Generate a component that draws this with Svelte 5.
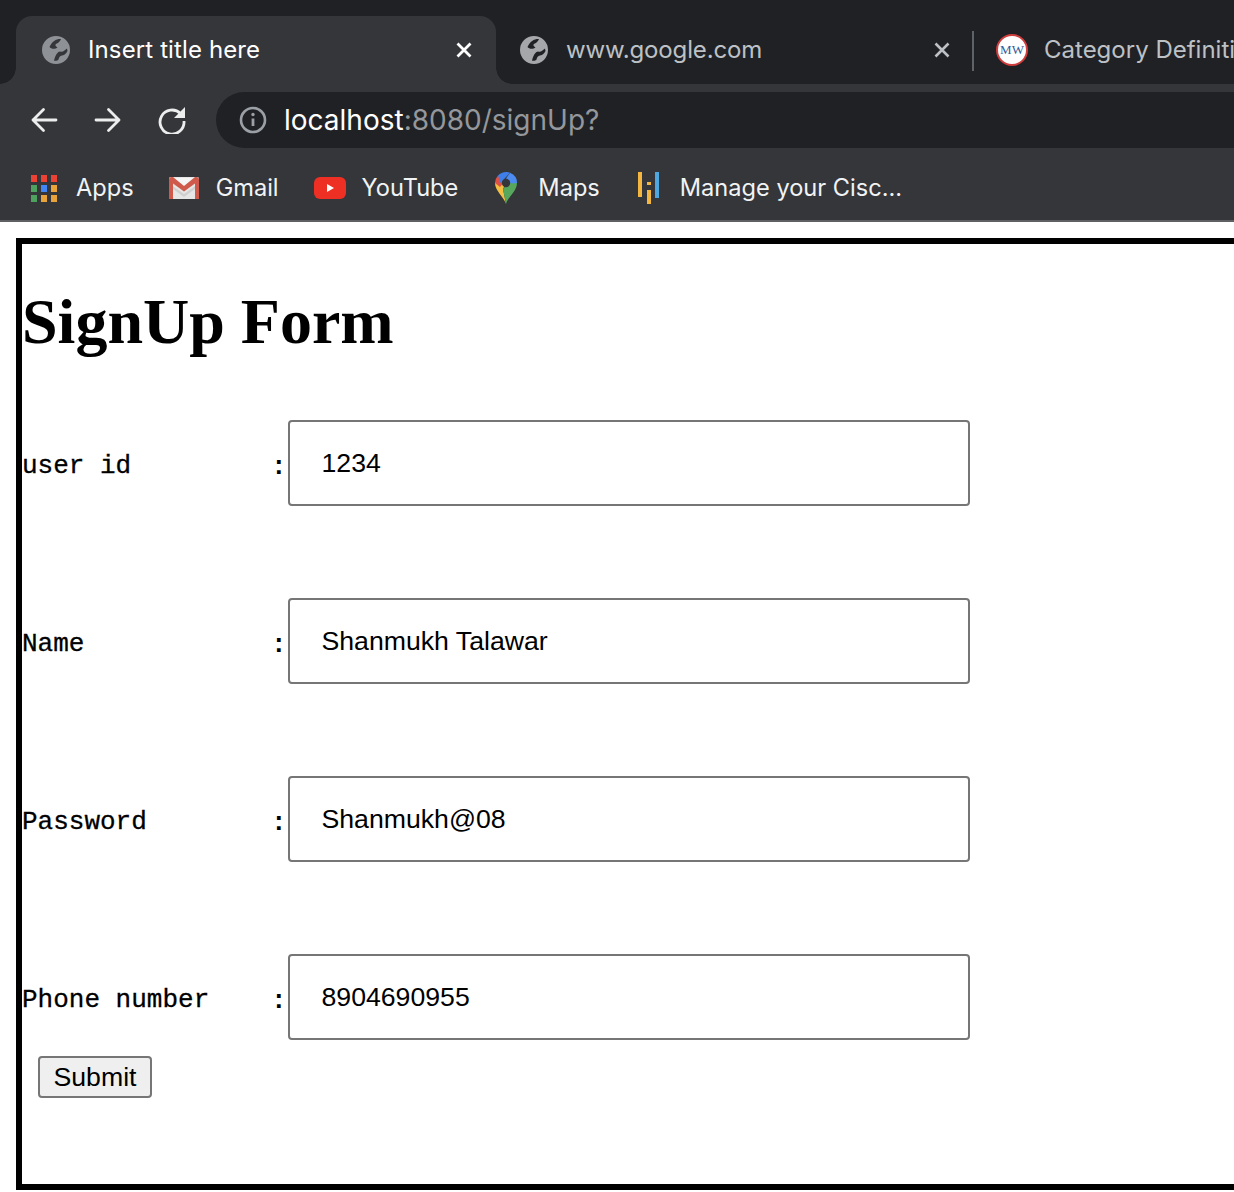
<script>
  const rows = [
    { label: 'user id', value: '1234' },
    { label: 'Name', value: 'Shanmukh Talawar' },
    { label: 'Password', value: 'Shanmukh@08' },
    { label: 'Phone number', value: '8904690955' }
  ];
  const appColors = ['#ea4335','#ea4335','#ea4335','#4fa15f','#4285f4','#e8a33a','#4fa15f','#e8a33a','#e8a33a'];
  const globe = 'M16 2a14 14 0 1 0 0 28 14 14 0 0 0 0-28zM21 5C17 4.500 12 7 9.500 13C11 15 15 15.500 17.500 13.500C16 12.500 15 11.500 15.500 10.500C17 9 19.500 9 21 5zM27 14.500C25 16 23 18.500 20 17.500C17.500 17.500 15 22 14 26.700C16 27 18 26.500 18.500 25.500C19 23 20 22 22 21.500C25 21 26 19.500 27.500 17z';
</script>

<div class="screen">
  <div class="chrome">
    <div class="tabstrip">
      <div class="tab active">
        <svg class="fav" viewBox="2 2 28 28"><path fill="#8e9196" fill-rule="evenodd" d={globe} /></svg>
        <span class="tabtitle">Insert title here</span>
        <svg class="close" viewBox="0 0 16 16"><path d="M1.500 1.500l13 13M14.500 1.500l-13 13" stroke="#fff" stroke-width="2.800" /></svg>
      </div>
      <div class="tab second">
        <svg class="fav" viewBox="2 2 28 28"><path fill="#a5a7aa" fill-rule="evenodd" d={globe} /></svg>
        <span class="tabtitle dim">www.google.com</span>
        <svg class="close" viewBox="0 0 16 16"><path d="M1.500 1.500l13 13M14.500 1.500l-13 13" stroke="#bdc1c6" stroke-width="2.600" /></svg>
      </div>
      <div class="divider"></div>
      <div class="tab third">
        <div class="mw">MW</div>
        <span class="tabtitle dim">Category Definition</span>
      </div>
    </div>

    <div class="toolbar">
      <div class="navs">
        <svg class="nav" viewBox="0 0 28 28" fill="none" stroke="#eceded" stroke-width="2.800" stroke-linecap="round" stroke-linejoin="round"><path d="M26 14H3M13.500 3.500 3 14l10.500 10.500" /></svg>
        <svg class="nav" viewBox="0 0 28 28" fill="none" stroke="#eceded" stroke-width="2.800" stroke-linecap="round" stroke-linejoin="round"><path d="M2 14h23M14.500 3.500 25 14 14.500 24.500" /></svg>
        <svg class="nav" viewBox="0 0 28 28" fill="none"><path d="M22.500 7.500A12 12 0 1 0 26 15" stroke="#eceded" stroke-width="2.800"/><path d="M27 1v11H16z" fill="#eceded"/></svg>
      </div>
      <div class="omnibox">
        <svg class="info" viewBox="0 0 28 28" fill="none"><circle cx="14" cy="14" r="12" stroke="#9aa0a6" stroke-width="2.600"/><path d="M14 12.500v7.500" stroke="#9aa0a6" stroke-width="2.800"/><circle cx="14" cy="8.500" r="1.700" fill="#9aa0a6"/></svg>
        <span class="url"><span class="host">localhost</span>:8080/signUp?</span>
      </div>
    </div>

    <div class="bookmarks">
      <div class="bm apps">
        <div class="grid">
          {#each appColors as c}<i style="background:{c}"></i>{/each}
        </div>
        <span>Apps</span>
      </div>
      <div class="bm gmail">
        <svg viewBox="0 0 30 22" width="30" height="22">
          <rect width="30" height="22" rx="1.500" fill="#e6e6e6"/>
          <path d="M4 9 15 17 26 9v3L15 20 4 12z" fill="#d0d0d0"/>
          <path d="M4 1h22l-11 9z" fill="#f5f5f5"/>
          <path d="M0 2.500C0 1 1 0 2.500 0H4L15 9 26 0h1.500C29 0 30 1 30 2.500V22h-4V6.500L15 14.500 4 6.500V22H0z" fill="#cf5a4c"/>
        </svg>
        <span>Gmail</span>
      </div>
      <div class="bm yt">
        <svg viewBox="0 0 32 22" width="32" height="22">
          <rect width="32" height="22" rx="6" fill="#ee2f24"/>
          <path d="M13 7v8l7-4z" fill="#fff"/>
        </svg>
        <span>YouTube</span>
      </div>
      <div class="bm maps">
        <svg viewBox="0 0 22 32" width="22" height="32">
          <path d="M11 32C9 25 0 19 0 11L4 5l7 6-3 6z" fill="#f4bf42"/>
          <path d="M11 32c2-7 11-13 11-21l-4-6-10 12 3 15z" fill="#57a85c"/>
          <path d="M3 3.500A11 11 0 0 0 0 11l5 4 5-6z" fill="#de5246"/>
          <path d="M3 3.500A11 11 0 0 1 11 0c2 0 3 .3 4 .8L5.500 11z" fill="#3d7ee8"/>
          <path d="M15 .8A11 11 0 0 1 22 11l-6 .5-5-5z" fill="#4c8bf0"/>
          <circle cx="11" cy="11" r="4.200" fill="#35363a"/>
        </svg>
        <span>Maps</span>
      </div>
      <div class="bm cisco">
        <svg viewBox="0 0 21 32" width="21" height="32">
          <rect x="0" y="0" width="4" height="25" fill="#f5b63f"/>
          <rect x="9" y="10" width="4" height="3" fill="#f5b63f"/>
          <rect x="9" y="18" width="4" height="14" fill="#f5b63f"/>
          <rect x="17" y="0" width="4" height="26" fill="#4fa7e0"/>
        </svg>
        <span>Manage your Cisc...</span>
      </div>
    </div>
  </div>

  <div class="page">
    <h1>SignUp Form</h1>
    <form class="form">
      {#each rows as row}
        <div class="row">
          <span class="label">{row.label}</span>
          <span class="colon">:</span>
          <input class="field" type="text" value={row.value} />
        </div>
      {/each}
      <button type="button" class="submit">Submit</button>
    </form>
  </div>
</div>

<style>
  :global(body) { margin: 0; background: #fff; }
  .screen { width: 1234px; height: 1192px; overflow: hidden; position: relative; background: #fff; }
  .chrome { background: #35363a; border-bottom: 2px solid #5f6064; font-family: Inter, "Noto Sans", sans-serif; }

  .tabstrip { height: 84px; background: #202124; display: flex; align-items: flex-end; padding-left: 16px; white-space: nowrap; overflow: hidden; position: relative; }
  .tab { height: 68px; display: flex; align-items: center; box-sizing: border-box; flex: none; position: relative; }
  .tab.active { width: 480px; background: #35363a; border-radius: 16px 16px 0 0; padding: 0 24px 0 26px; }
  .tab.active::before, .tab.active::after { content: ""; position: absolute; bottom: 0; width: 16px; height: 16px; }
  .tab.active::before { left: -16px; background: radial-gradient(circle at 0 0, transparent 15.500px, #35363a 16px); }
  .tab.active::after { right: -16px; background: radial-gradient(circle at 100% 0, transparent 15.500px, #35363a 16px); }
  .tab.second { width: 476px; padding: 0 22px 0 24px; }
  .fav { width: 28px; height: 28px; flex: none; }
  .tabtitle { font-size: 24px; color: #fff; margin-left: 18px; flex: 1; margin-bottom: 2px; }
  .active .tabtitle { letter-spacing: 0.12px; }
  .second .tabtitle { letter-spacing: -0.14px; }
  .dim { color: #bdc1c6; }
  .close { width: 16px; height: 16px; flex: none; }
  .divider { width: 2px; height: 40px; background: #5f6368; align-self: flex-end; margin-bottom: 13px; flex: none; }
  .tab.third { padding-left: 22px; }
  .mw { width: 32px; height: 32px; box-sizing: border-box; border-radius: 50%; background: #fff; border: 2px solid #cf3d3d; color: #2f5d9c; font: 13px/28px "Liberation Serif", serif; text-align: center; flex: none; }
  .third .tabtitle { margin-left: 16px; }

  .toolbar { height: 72px; display: flex; align-items: center; padding-left: 30px; }
  .navs { display: flex; gap: 36px; flex: none; }
  .nav { width: 28px; height: 28px; flex: none; }
  .omnibox { height: 56px; flex: 1; margin-left: 30px; margin-right: -60px; background: #202124; border-radius: 28px; display: flex; align-items: center; padding-left: 23px; }
  .info { width: 28px; height: 28px; flex: none; }
  .url { font-size: 28px; color: #94979b; margin-left: 17px; margin-bottom: 1px; }
  .host { color: #fff; }

  .bookmarks { height: 64px; display: flex; align-items: center; padding-left: 31px; font-size: 23.600px; color: #f1f3f4; }
  .bm { display: flex; align-items: center; flex: none; white-space: nowrap; }
  .bm span { margin-bottom: 2px; }
  .grid { display: grid; grid-template-columns: repeat(3, 6px); grid-auto-rows: 7px; column-gap: 4px; row-gap: 3px; margin-right: 19px; }
  .grid i { display: block; }
  .bm svg { flex: none; }
  .apps { margin-right: 35px; }
  .gmail { margin-right: 35px; }
  .gmail span { margin-left: 17px; }
  .yt { margin-right: 37px; }
  .yt span { margin-left: 16px; }
  .maps { margin-right: 38px; }
  .maps span { margin-left: 21px; }
  .cisco span { margin-left: 21px; }

  .page { margin: 16px -100px 0 16px; border: 6px solid #000; height: 940px; box-sizing: content-box; color: #000; }
  h1 { margin: 41px 0 0; font: bold 64px/74px "Liberation Serif", serif; }
  .form { margin-top: 61px; display: flex; flex-direction: column; }
  .row { height: 86px; display: flex; align-items: center; margin-bottom: 92px; }
  .row:last-of-type { margin-bottom: 16px; }
  .label { width: 249px; flex: none; font: 26px/30px "Liberation Mono", monospace; margin-top: 6px; -webkit-text-stroke: 0.3px #000; }
  .colon { width: 17px; flex: none; font: bold 26px/30px "Liberation Mono", monospace; margin-top: 8px; }
  .field { width: 682px; height: 86px; box-sizing: border-box; border: 2px solid #767676; border-radius: 4px; padding: 0 31.500px; font: 26.670px "Liberation Sans", sans-serif; color: #000; background: #fff; outline: none; }
  .submit { align-self: flex-start; margin-left: 16px; width: 114px; height: 42px; box-sizing: border-box; border: 2px solid #767676; border-radius: 4px; background: #efefef; font: 26.670px "Liberation Sans", sans-serif; color: #000; padding: 0; }
</style>
